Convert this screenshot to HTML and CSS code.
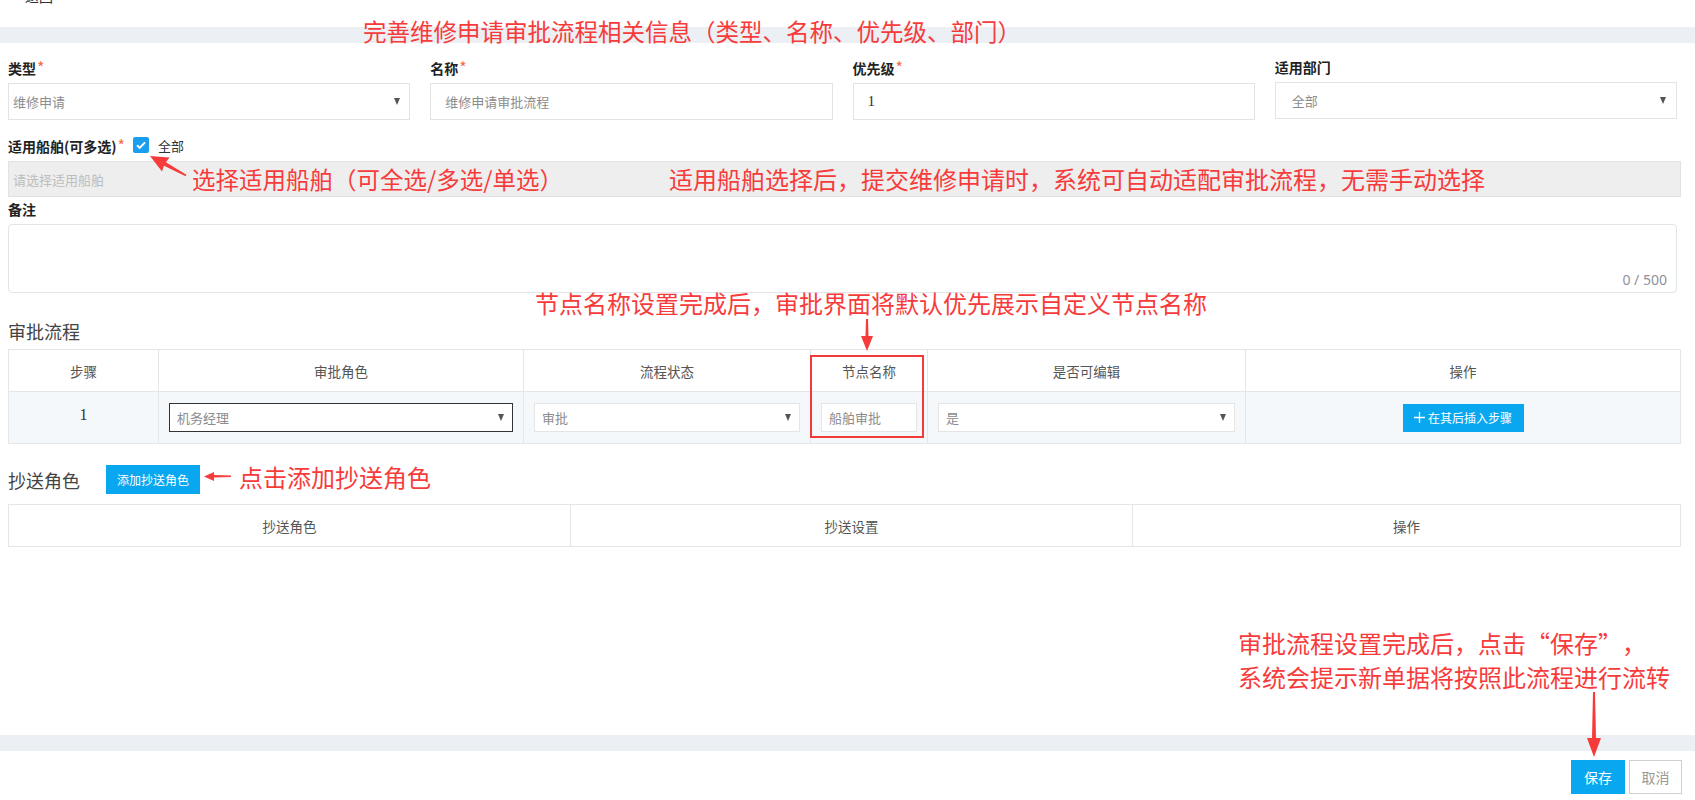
FILE: index.html
```html
<!DOCTYPE html>
<html lang="zh-CN">
<head>
<meta charset="utf-8">
<title>审批流程设置</title>
<link rel="stylesheet" href="styles.css">
</head>
<body>
<div class="topbar"><span class="back">返回</span></div>
<div class="band"></div>

<main class="form">
  <div class="grid4">
    <div class="field">
      <div class="lbl">类型<span class="req">*</span></div>
      <div class="ctrl select pad-s"><span class="val">维修申请</span><i class="caret"></i></div>
    </div>
    <div class="field">
      <div class="lbl">名称<span class="req">*</span></div>
      <div class="ctrl pad-m"><span class="val">维修申请审批流程</span></div>
    </div>
    <div class="field">
      <div class="lbl">优先级<span class="req">*</span></div>
      <div class="ctrl pad-m"><span class="val num">1</span></div>
    </div>
    <div class="field">
      <div class="lbl">适用部门</div>
      <div class="ctrl select pad-l"><span class="val">全部</span><i class="caret"></i></div>
    </div>
  </div>

  <div class="field ships">
    <div class="lbl-row">
      <span class="lbl">适用船舶(可多选)<span class="req">*</span></span>
      <span class="checkbox"><svg viewBox="0 0 16 16" width="16" height="16"><path d="M4 8.2l2.7 2.7L12 5.4" fill="none" stroke="#fff" stroke-width="2"/></svg></span>
      <span class="chk-text">全部</span>
    </div>
    <div class="ctrl disabled pad-s"><span class="ph">请选择适用船舶</span></div>
  </div>

  <div class="field remark">
    <div class="lbl">备注</div>
    <div class="textarea"><span class="count">0 / 500</span></div>
  </div>

  <h2 class="sec-title flow-title">审批流程</h2>
  <table class="tbl flow">
    <colgroup>
      <col style="width:150px"><col style="width:365px"><col style="width:287px"><col style="width:117px"><col style="width:318px"><col>
    </colgroup>
    <thead>
      <tr><th>步骤</th><th>审批角色</th><th>流程状态</th><th>节点名称</th><th>是否可编辑</th><th>操作</th></tr>
    </thead>
    <tbody>
      <tr>
        <td class="step">1</td>
        <td><div class="cell-ctrl select focus"><span class="val">机务经理</span><i class="caret"></i></div></td>
        <td><div class="cell-ctrl select"><span class="val">审批</span><i class="caret"></i></div></td>
        <td><div class="cell-ctrl"><span class="val">船舶审批</span></div></td>
        <td><div class="cell-ctrl select"><span class="val">是</span><i class="caret"></i></div></td>
        <td class="center"><button class="btn btn-insert"><svg width="11" height="11" viewBox="0 0 11 11"><path d="M5.5 0v11M0 5.5h11" stroke="#fff" stroke-width="1.3"/></svg>在其后插入步骤</button></td>
      </tr>
    </tbody>
  </table>

  <div class="cc-head">
    <h2 class="sec-title">抄送角色</h2>
    <button class="btn btn-add">添加抄送角色</button>
  </div>
  <table class="tbl cc">
    <colgroup><col style="width:562px"><col style="width:562px"><col></colgroup>
    <thead><tr><th>抄送角色</th><th>抄送设置</th><th>操作</th></tr></thead>
  </table>
</main>

<div class="band"></div>
<footer class="footer">
  <button class="btn btn-save">保存</button>
  <button class="btn btn-cancel">取消</button>
</footer>

<div class="note n1">完善维修申请审批流程相关信息（类型、名称、优先级、部门）</div>
<div class="note n2">选择适用船舶（可全选/多选/单选）</div>
<div class="note n3">适用船舶选择后，提交维修申请时，系统可自动适配审批流程，无需手动选择</div>
<div class="note n4">节点名称设置完成后，审批界面将默认优先展示自定义节点名称</div>
<div class="note n5">点击添加抄送角色</div>
<div class="note n6">审批流程设置完成后，点击<span class="q ql">“</span>保存<span class="q qr">”</span>，<br>系统会提示新单据将按照此流程进行流转</div>
<div class="hl-box"></div>

<svg class="arrows" width="1695" height="800" viewBox="0 0 1695 800">
  <g fill="#f73b3b">
    <g transform="translate(150 156) rotate(208.5)">
      <polygon points="-41,-0.8 -17,-2 -18,-8 0,0 -18,8 -17,2 -41,0.8"/>
    </g>
    <polygon points="866,319 868,319 868.5,336 873,336 867,351 861,336 865.5,336"/>
    <polygon points="231,475.5 231,477 214,477.6 214,481 204,476.5 214,472 214,475"/>
    <polygon points="1593,692 1595,692 1596,738 1601,738 1594,757 1587,738 1592,738"/>
  </g>
</svg>
</body>
</html>
```

FILE: styles.css
```css
* { box-sizing: border-box; }

html, body {
  margin: 0;
  padding: 0;
  background: #fff;
  font-family: "Noto Sans CJK SC", "Noto Sans", "Liberation Sans", sans-serif;
  color: #333;
  font-size: 13px;
}

body {
  position: relative;
  width: 1695px;
  height: 800px;
  overflow: hidden;
}

.topbar {
  height: 27px;
  overflow: hidden;
  padding-left: 25px;
}

.back {
  display: block;
  margin-top: -14px;
  line-height: 20px;
  font-size: 14px;
  color: #333;
}

.band {
  height: 16px;
  background: #eceff3;
}

.form {
  height: 692px;
  padding: 14px 14px 0 8px;
}

.grid4 {
  display: grid;
  grid-template-columns: repeat(4, 1fr);
  column-gap: 20px;
  margin-right: 4px;
}

.lbl {
  font-size: 14px;
  font-weight: 700;
  line-height: 20px;
  color: #222;
  margin-bottom: 5px;
}

.req {
  color: #f5694b;
  font-weight: 400;
  font-size: 16px;
  margin-left: 1px;
}

.ctrl {
  height: 37px;
  border: 1px solid #e3e3e3;
  display: flex;
  align-items: center;
  background: #fff;
}

.pad-s { padding: 0 9px 0 4px; }
.pad-m { padding: 0 14px; }
.pad-l { padding: 0 10px 0 16px; }

.val {
  color: #8c8c8c;
  font-size: 13px;
}

.num {
  font-family: "Liberation Serif", "DejaVu Serif", serif;
  font-size: 15px;
  color: #333;
}

.caret {
  margin-left: auto;
  width: 0;
  height: 0;
  border-left: 3.5px solid transparent;
  border-right: 3.5px solid transparent;
  border-top: 7px solid #555;
}

.ships {
  margin-top: 15px;
}

.lbl-row {
  display: flex;
  align-items: center;
  height: 20px;
  margin-bottom: 6px;
}

.lbl-row .lbl { margin-bottom: 0; }

.checkbox {
  width: 16px;
  height: 16px;
  background: #1a9ff0;
  border-radius: 2px;
  margin-left: 8px;
  display: inline-flex;
}

.chk-text {
  margin-left: 9px;
  font-size: 13px;
  color: #333;
}

.disabled {
  height: 36px;
  background: #eeeeee;
  border-color: #e2e2e2;
}

.ph {
  color: #bdbdbd;
  font-size: 13px;
}

.remark {
  margin-top: 2px;
}

.textarea {
  position: relative;
  height: 69px;
  border: 1px solid #e2e4e8;
  border-radius: 4px;
  margin-right: 4px;
}

.count {
  position: absolute;
  right: 9px;
  bottom: 3px;
  font-size: 14px;
  color: #8e929b;
  font-family: "Noto Sans", "Liberation Sans", sans-serif;
}

.sec-title {
  margin: 0;
  font-size: 18px;
  font-weight: 400;
  line-height: 24px;
  color: #444;
}

.flow-title {
  margin-top: 26px;
  margin-bottom: 6px;
}

.tbl {
  width: 100%;
  border-collapse: collapse;
  table-layout: fixed;
}

.tbl th, .tbl td {
  border: 1px solid #e4e6ea;
  text-align: center;
  font-weight: 400;
  color: #555;
  font-size: 13.5px;
}

.tbl th {
  height: 42px;
  background: #fff;
}

.flow td {
  height: 52px;
  background: #f5f8fb;
  padding: 0 10px;
  text-align: left;
}

.flow td.center { text-align: center; }

.flow td.step {
  text-align: center;
  font-family: "Liberation Serif", "DejaVu Serif", serif;
  font-size: 16px;
  color: #333;
  padding-bottom: 6px;
}

.cell-ctrl {
  height: 29px;
  border: 1px solid #e5e5e5;
  background: #fff;
  display: flex;
  align-items: center;
  padding: 0 8px 0 7px;
}

.cell-ctrl.focus {
  border-color: #333;
}

.btn {
  border: none;
  font-family: inherit;
  cursor: pointer;
}

.btn-insert {
  height: 28px;
  width: 121px;
  background: #09a7ef;
  color: #fff;
  font-size: 12px;
  display: inline-flex;
  align-items: center;
  justify-content: center;
  gap: 3px;
  padding: 0;
}

.cc-head {
  display: flex;
  align-items: center;
  margin-top: 21px;
  margin-bottom: 10px;
  gap: 26px;
}

.btn-add {
  height: 29px;
  width: 94px;
  background: #09a7ef;
  color: #fff;
  font-size: 12px;
  padding: 0;
}

.cc th { height: 42px; }

.footer {
  display: flex;
  justify-content: flex-end;
  gap: 4px;
  padding: 9px 13px 0 0;
}

.btn-save, .btn-cancel {
  height: 34px;
  width: 54px;
  font-size: 14px;
  padding: 0;
}

.btn-save {
  background: #09a7ef;
  color: #fff;
}

.btn-cancel {
  background: #fff;
  color: #999;
  border: 1px solid #cfcfcf;
  width: 53px;
}

/* annotation overlays */
.note {
  position: absolute;
  color: #f73b3b;
  font-size: 24px;
  line-height: 30px;
  white-space: nowrap;
}

.n1 { left: 363px; top: 16px; font-size: 23.5px; }
.n2 { left: 192px; top: 164px; font-size: 23.5px; }
.n3 { left: 669px; top: 164px; }
.n4 { left: 535px; top: 288px; }
.n5 { left: 239px; top: 462px; }
.n6 { left: 1238px; top: 626px; line-height: 34px; }

.q {
  display: inline-block;
  width: 1em;
}

.ql { text-align: right; }
.qr { text-align: left; }

.hl-box {
  position: absolute;
  left: 810px;
  top: 355px;
  width: 114px;
  height: 83px;
  border: 2px solid #f33a3a;
}

.arrows {
  position: absolute;
  left: 0;
  top: 0;
  pointer-events: none;
}
```
